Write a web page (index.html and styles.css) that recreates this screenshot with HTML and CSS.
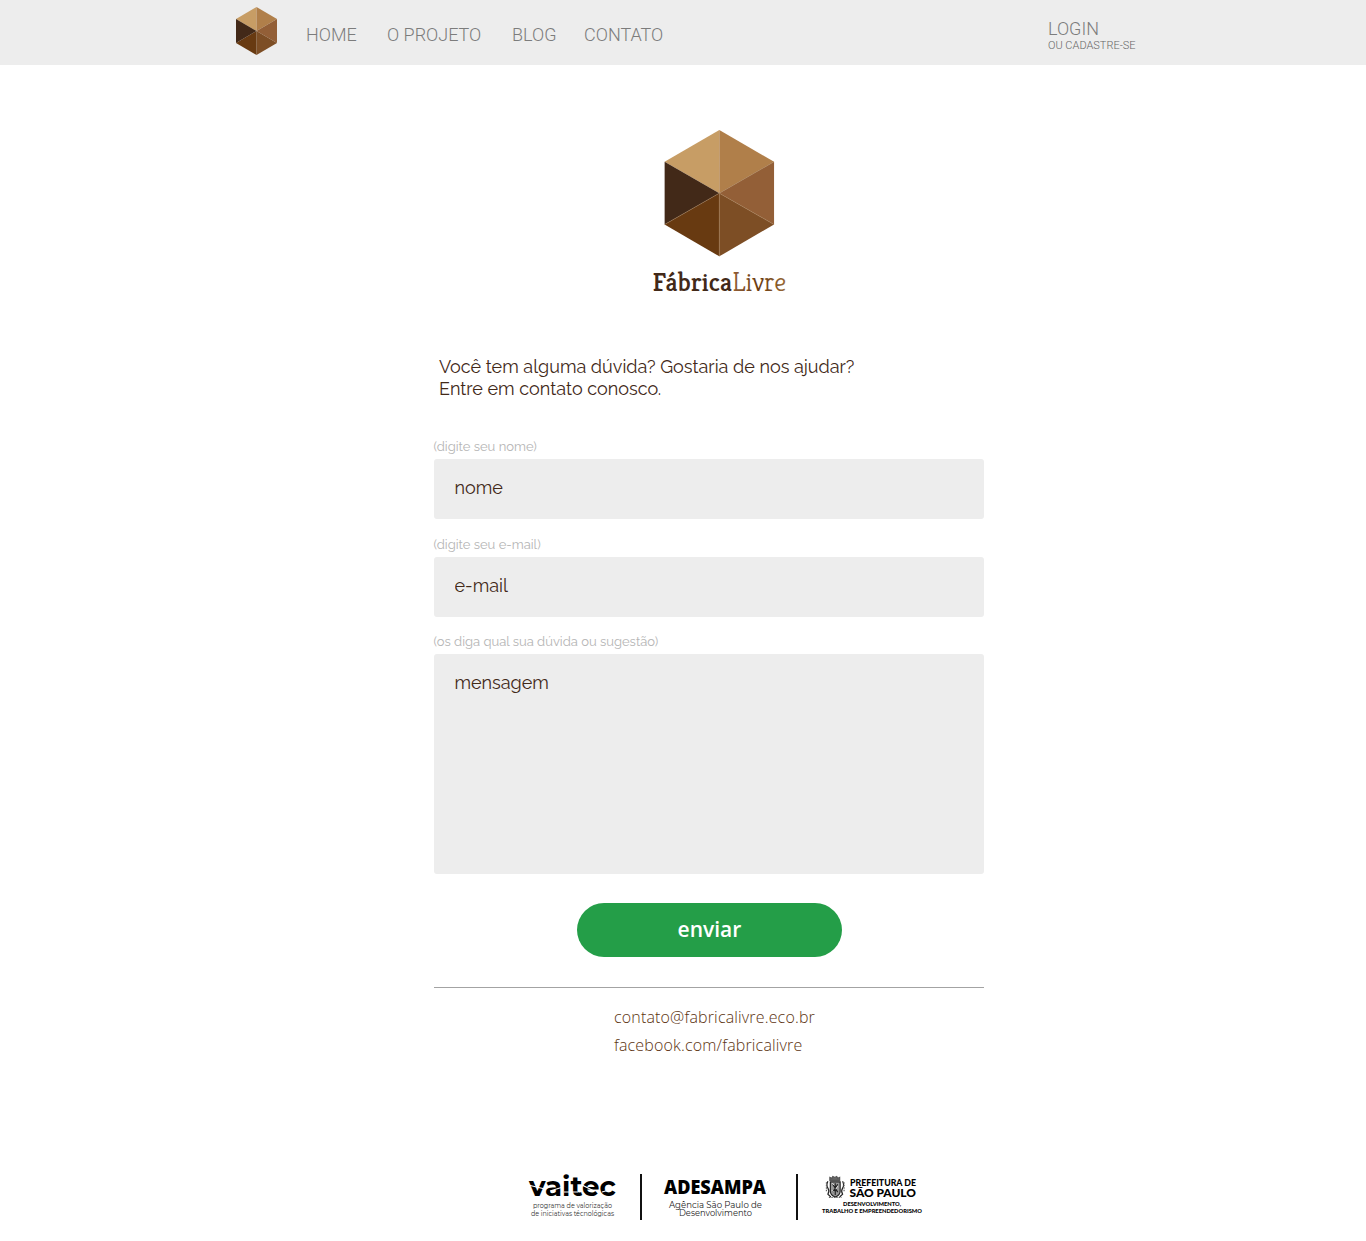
FILE: index.html
```html
<!DOCTYPE html>
<html lang="pt-BR">
<head>
<meta charset="utf-8">
<title>Fábrica Livre – Contato</title>
<link rel="stylesheet" href="styles.css">
</head>
<body>
<header class="topbar">
  <a class="brand" href="#" aria-label="Fábrica Livre">
    <svg width="41" height="48" viewBox="0 0 110 127" preserveAspectRatio="none">
      <path fill="#c79d65" d="M55 63.500V0L0 32z"/><path fill="#b07f4a" d="M55 63.500V0l55 32z"/>
      <path fill="#935f37" d="M55 63.500L110 32v63z"/><path fill="#7d4e25" d="M55 63.500L110 95l-55 32z"/>
      <path fill="#683a11" d="M55 63.500V127L0 95z"/><path fill="#422918" d="M55 63.500L0 95V32z"/>
    </svg>
  </a>
  <nav class="menu">
    <a class="home" href="#">HOME</a>
    <a class="project" href="#">O PROJETO</a>
    <a class="blog" href="#">BLOG</a>
    <a class="contact" href="#">CONTATO</a>
  </nav>
  <div class="account">
    <a class="login" href="#">LOGIN</a>
    <a class="signup" href="#">OU CADASTRE-SE</a>
  </div>
</header>

<main class="page">
  <div class="logo">
    <svg width="110" height="127" viewBox="0 0 110 127">
      <g transform="translate(.6 0) scale(.995)">
      <path fill="#c79d65" d="M55 63.500V0L0 32z"/><path fill="#b07f4a" d="M55 63.500V0l55 32z"/>
      <path fill="#935f37" d="M55 63.500L110 32v63z"/><path fill="#7d4e25" d="M55 63.500L110 95l-55 32z"/>
      <path fill="#683a11" d="M55 63.500V127L0 95z"/><path fill="#422918" d="M55 63.500L0 95V32z"/>
      <path fill="none" stroke="#a9815a" stroke-width=".5" d="M0 95L110 32M55 63.500V127M55 63.500L110 95"/>
      </g>
    </svg>
    <svg class="wordmark" width="136" height="40" viewBox="0 0 136 40">
      <defs>
        <linearGradient id="livre" x1="0" x2="1"><stop offset="0" stop-color="#935f37"/><stop offset=".5" stop-color="#683a11"/><stop offset="1" stop-color="#996a38"/></linearGradient>
      </defs>
      <text x=".5" y="28" textLength="79.500" lengthAdjust="spacingAndGlyphs" font-weight="500" fill="#422918">Fábrica</text>
      <text x="80.200" y="28" textLength="54" lengthAdjust="spacingAndGlyphs" font-weight="350" fill="url(#livre)">Livre</text>
    </svg>
  </div>

  <p class="intro">Você tem alguma dúvida? Gostaria de nos ajudar?<br>Entre em contato conosco.</p>

  <form class="form">
    <label class="hint hint-name" for="nome">(digite seu nome)</label>
    <input class="field" id="nome" value="nome">
    <label class="hint hint-mail" for="email">(digite seu e-mail)</label>
    <input class="field field-mail" id="email" value="e-mail">
    <label class="hint hint-message" for="mensagem">(os diga qual sua dúvida ou sugestão)</label>
    <textarea class="field field-message" id="mensagem">mensagem</textarea>
    <button class="send" type="button">enviar</button>
  </form>

  <address class="links">
    <a class="mail" href="#">contato@fabricalivre.eco.br</a>
    <a class="facebook" href="#">facebook.com/fabricalivre</a>
  </address>
</main>

<footer class="partners">
  <svg class="vaitec" width="90" height="60" viewBox="0 0 90 60">
    <text x="1" y="31" font-size="28" font-weight="700" textLength="87" lengthAdjust="spacingAndGlyphs">vaitec</text>
    <path stroke="#fff" stroke-width="1.200" fill="none" d="M0 20l17 4M22 26l13-4M36 27h14M54 20l12 6M74 27l14-4"/>
    <text x="5" y="42.800" font-size="6.800" fill="#333" textLength="79" lengthAdjust="spacingAndGlyphs">programa de valorização</text>
    <text x="3" y="50.600" font-size="6.800" fill="#333" textLength="83" lengthAdjust="spacingAndGlyphs">de iniciativas técnológicas</text>
  </svg>
  <span class="rule"></span>
  <svg class="adesampa" width="104" height="60" viewBox="0 0 104 60">
    <text class="ade" x="0" y="29" font-size="19.500" font-weight="800" textLength="102" lengthAdjust="spacingAndGlyphs">ADESAMPA</text>
    <text x="5" y="42.500" font-size="9" fill="#222" textLength="93" lengthAdjust="spacingAndGlyphs">Agência São Paulo de</text>
    <text x="15" y="51.300" font-size="9" fill="#222" textLength="73" lengthAdjust="spacingAndGlyphs">Desenvolvimento</text>
  </svg>
  <span class="rule"></span>
  <svg class="prefeitura" width="104" height="60" viewBox="0 0 104 60">
    <g fill="none" stroke="#222" stroke-width="1.200" transform="translate(1 8.500) scale(.98)">
      <path fill="#666" stroke="#555" d="M7 7V4l2 1 1-2 2 1 2-1 1 2 2-1v3z"/>
      <path fill="#999" d="M7.500 8.500h10V18q0 4-5 6-5-2-5-6z"/>
      <path d="M5 8q-2 4 0 7t0 6l3 3M20 8q2 4 0 7t0 6l-3 3M10 11l5 8M15 11l-5 8M12.500 10v12"/>
      <path stroke="#666" stroke-dasharray="1.500 1" d="M3.500 9v10M21.500 9v10M6 24.500h13"/>
      <path stroke="#fff" stroke-width=".8" d="M9.500 10l2 2M15 13l-2 3M9 17l2 2"/>
    </g>
    <text x="28" y="20.900" font-size="9" font-weight="900" textLength="66" lengthAdjust="spacingAndGlyphs">PREFEITURA DE</text>
    <text x="27.500" y="31.800" font-size="12" font-weight="900" textLength="66.500" lengthAdjust="spacingAndGlyphs">SÃO PAULO</text>
    <text x="21" y="40.700" font-size="5.600" font-weight="900" textLength="58" lengthAdjust="spacingAndGlyphs">DESENVOLVIMENTO,</text>
    <text x="0" y="48" font-size="5.600" font-weight="900" textLength="100" lengthAdjust="spacingAndGlyphs">TRABALHO E EMPREENDEDORISMO</text>
  </svg>
</footer>
</body>
</html>
```

FILE: styles.css
```css
* { box-sizing: border-box; }
body { margin: 0; background: #fff; min-height: 1241px; }
a { color: inherit; text-decoration: none; }
svg { display: block; flex: none; overflow: visible; }

.topbar { display: flex; height: 65px; padding-left: 236px; background: #ededed; color: #7c7c7c; font: 300 18px/24px Roboto, sans-serif; }
.brand { width: 41px; margin: 7px 29px 0 0; }
.menu { display: flex; width: 742px; padding-top: 23px; white-space: nowrap; }
.home { width: 81px; }
.project { width: 125px; }
.blog { width: 72px; }
.account { display: flex; flex-direction: column; padding-top: 17px; }
.login { height: 23px; }
.signup { color: #666; font-size: 11px; line-height: 12px; }

.page { width: 550px; margin-left: 434px; padding-top: 65px; }
.logo { display: flex; flex-direction: column; align-items: center; padding-left: 20px; }
.wordmark { margin: 6px 0 0 1px; font-family: Kreon, "Roboto Slab", "Liberation Serif", serif; font-size: 27px; }

.intro { margin: 53px 0 0 5px; color: #422918; font: 400 18px/22px Raleway, "Open Sans", sans-serif; white-space: nowrap; letter-spacing: .01px; }
.form { display: flex; flex-direction: column; margin-top: 38px; }
.hint { height: 21px; margin-left: -.5px; color: #b5b5b5; font: 400 13px/18px Raleway, "Open Sans", sans-serif; }
.hint-mail { margin-top: 17px; }
.hint-message { margin-top: 16px; }
.field { width: 550px; height: 60px; padding: 0 20px 3px 20.5px; border: 0; border-radius: 3px; background: #ededed; color: #422918; font: 400 18px/24px Raleway, "Open Sans", sans-serif; outline: 0; }
.field-message { display: block; height: 220px; padding-top: 17px; resize: none; overflow: hidden; }
.send { width: 265px; height: 54px; margin: 29px 0 0 143px; padding: 0 0 2px; border: 0; border-radius: 27px; background: #249e48; color: #fff; font: 600 21px/28px "Open Sans", sans-serif; }
.links { display: flex; flex-direction: column; margin-top: 30px; padding: 15px 0 0 180px; border-top: 1px solid #a3a3a3; color: #5c3310; font: 300 16px/28px "Open Sans", sans-serif; letter-spacing: .16px; }

.partners { display: flex; margin: 106px 0 0 528px; font-family: Montserrat, "Open Sans", sans-serif; }
.rule { width: 2px; height: 46px; margin-top: 9px; background: #111; }
.vaitec { margin-right: 22px; }
.adesampa { margin: 0 28px 0 22px; }
.ade { font-family: "Open Sans", sans-serif; }
.prefeitura { margin-left: 24px; font-family: Lato, sans-serif; }
```
